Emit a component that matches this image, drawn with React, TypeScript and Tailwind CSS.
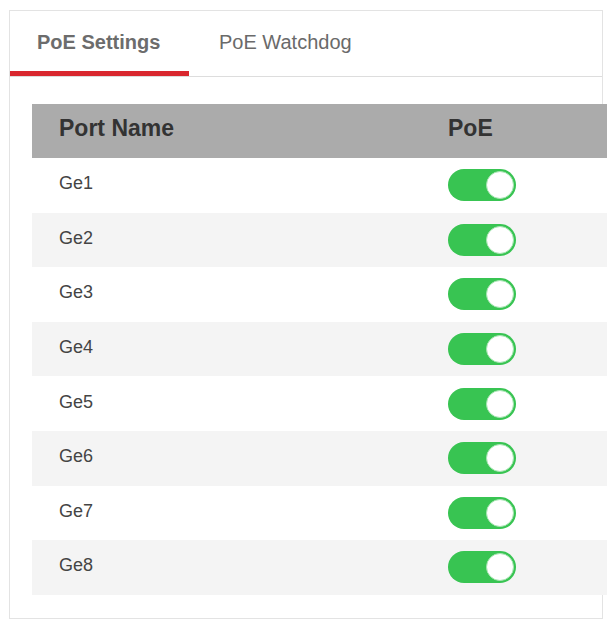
import React, { useState } from 'react'

const ports = ['Ge1', 'Ge2', 'Ge3', 'Ge4', 'Ge5', 'Ge6', 'Ge7', 'Ge8']

const Toggle: React.FunctionComponent<{ on: boolean; onClick: () => void }> = ({ on, onClick }) => (
  <button
    onClick={onClick}
    className={`flex items-center w-[68px] h-[32px] rounded-full px-[2px] focus:outline-none ${
      on ? 'bg-[#38c452] justify-end' : 'bg-[#cfcfcf] justify-start'
    }`}
  >
    <span className="block w-[28px] h-[28px] rounded-full bg-white border border-[#a6e4b1]" />
  </button>
)

const App: React.FunctionComponent = () => {
  const [tab, setTab] = useState(0)
  const [state, setState] = useState(ports.map(() => true))

  const flip = (i: number): void => {
    setState(state.map((v, j) => (j === i ? !v : v)))
  }

  return (
    <main className="bg-white w-[607px] h-[620px] pl-[9px] pt-[10px] font-['Liberation_Sans',Arial,sans-serif] overflow-hidden">
      <div className="w-[594px] h-[609px] border border-[#e3e3e3] bg-white">
        <div className="flex h-[66px] border-b border-[#dddddd]">
          <button
            onClick={(): void => setTab(0)}
            className={`w-[179px] pl-[27px] text-left text-[20px] font-bold text-[#6c6c6c] border-b-[5px] focus:outline-none ${
              tab === 0 ? 'border-[#d9272e]' : 'border-transparent'
            }`}
          >
            <span className="relative top-[1px]">PoE Settings</span>
          </button>
          <button
            onClick={(): void => setTab(1)}
            className={`ml-[30px] text-left text-[20px] text-[#6a6a6a] border-b-[5px] focus:outline-none ${
              tab === 1 ? 'border-[#d9272e]' : 'border-transparent'
            }`}
          >
            <span className="relative top-[1px]">PoE Watchdog</span>
          </button>
        </div>
        <div className="pl-[22px] pt-[27px] w-[620px]">
          <div className="flex items-center h-[54px] bg-[#ababab] text-[23px] font-bold text-[#333333]">
            <div className="w-[416px] pl-[27px] -mt-[5px]">Port Name</div>
            <div className="-mt-[5px]">PoE</div>
          </div>
          {ports.map((name, i) => (
            <div key={name} className={`flex items-center h-[54.6px] ${i % 2 === 1 ? 'bg-[#f4f4f4]' : 'bg-white'}`}>
              <div className="w-[416px] pl-[27px] text-[18px] text-[#444444] -mt-[3px]">{name}</div>
              <Toggle on={state[i]} onClick={(): void => flip(i)} />
            </div>
          ))}
        </div>
      </div>
    </main>
  )
}

export default App
